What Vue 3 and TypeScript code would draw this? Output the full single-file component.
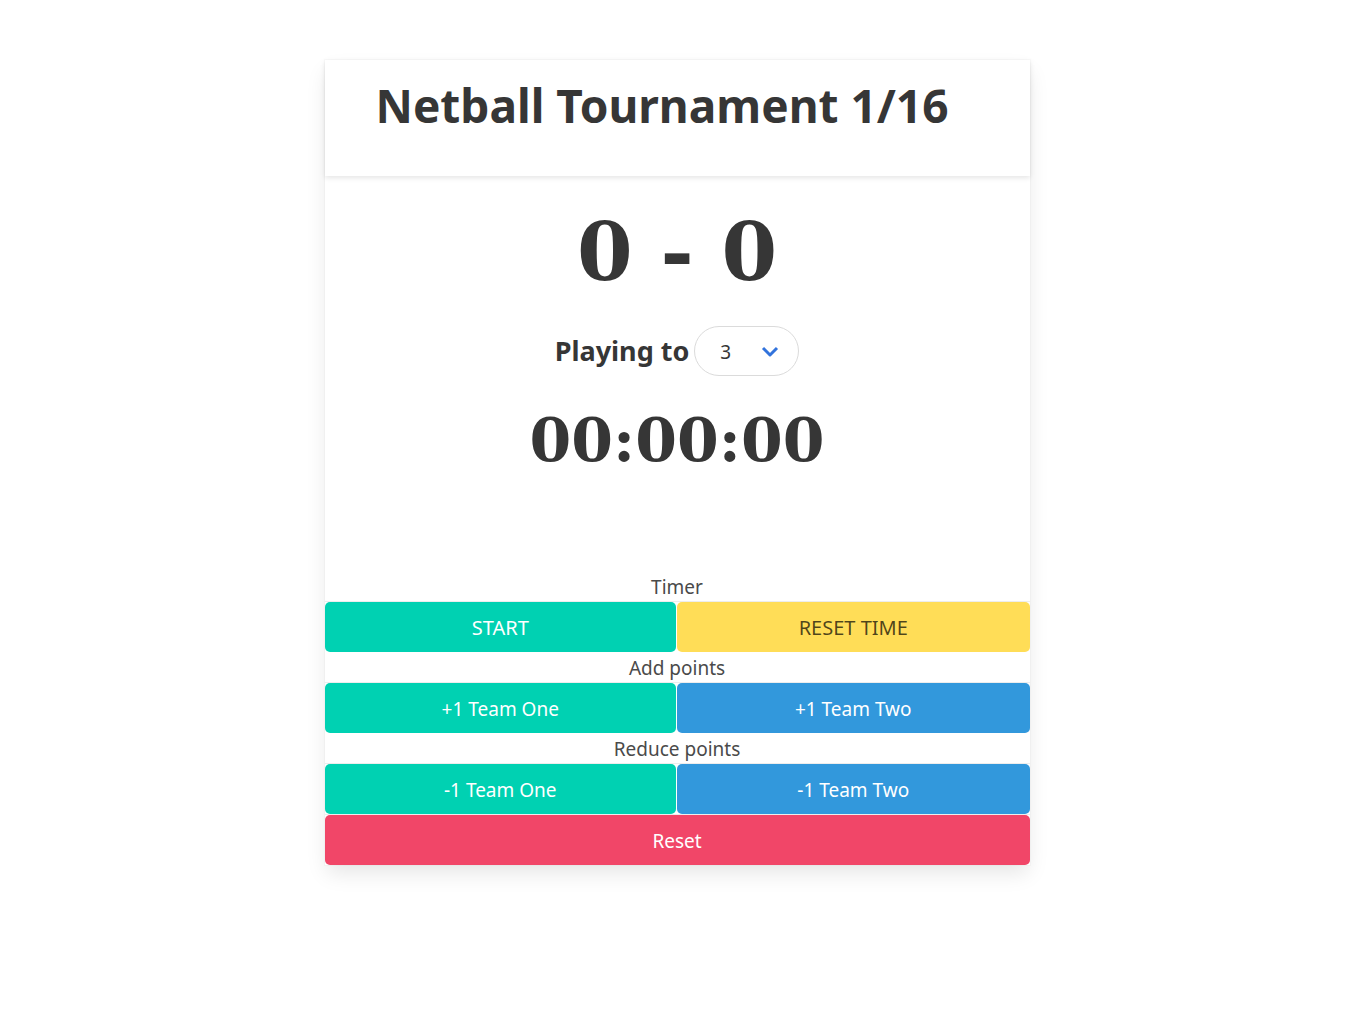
<script setup lang="ts">
import { computed, onBeforeUnmount, ref } from 'vue'

const title = 'Netball Tournament 1/16'
const teamOne = ref(0)
const teamTwo = ref(0)
const target = ref(3)
const targets = [3, 5, 7, 10]
const seconds = ref(0)
const running = ref(false)
let timer: number | undefined

const clock = computed(() =>
  [Math.floor(seconds.value / 3600), Math.floor(seconds.value / 60) % 60, seconds.value % 60]
    .map((n) => String(n).padStart(2, '0'))
    .join(':'),
)

function stop() {
  window.clearInterval(timer)
  running.value = false
}

function toggle() {
  if (running.value) {
    stop()
    return
  }
  running.value = true
  timer = window.setInterval(() => seconds.value++, 1000)
}

function resetTime() {
  stop()
  seconds.value = 0
}

function change(team: 1 | 2, amount: number) {
  const score = team === 1 ? teamOne : teamTwo
  score.value = Math.min(target.value, Math.max(0, score.value + amount))
}

function resetAll() {
  teamOne.value = 0
  teamTwo.value = 0
  resetTime()
}

onBeforeUnmount(stop)
</script>

<template>
  <main class="page">
    <article class="card">
      <header class="card-header">
        <h1 class="title">{{ title }}</h1>
      </header>

      <section class="card-content">
        <p class="score">{{ teamOne }} - {{ teamTwo }}</p>
        <div class="target">
          <label for="target">Playing to</label>
          <div class="select">
            <select id="target" v-model="target">
              <option v-for="n in targets" :key="n" :value="n">{{ n }}</option>
            </select>
            <svg class="arrow" viewBox="0 0 18 12" aria-hidden="true">
              <path d="M2 2 9 9l7-7" />
            </svg>
          </div>
        </div>
        <p class="clock">{{ clock }}</p>
      </section>

      <p class="caption">Timer</p>
      <footer class="actions timer-actions">
        <button class="primary" type="button" @click="toggle">{{ running ? 'STOP' : 'START' }}</button>
        <button class="warning" type="button" @click="resetTime">RESET TIME</button>
      </footer>
      <p class="caption">Add points</p>
      <footer class="actions">
        <button class="primary" type="button" @click="change(1, 1)">+1 Team One</button>
        <button class="info" type="button" @click="change(2, 1)">+1 Team Two</button>
      </footer>
      <p class="caption">Reduce points</p>
      <footer class="actions">
        <button class="primary" type="button" @click="change(1, -1)">-1 Team One</button>
        <button class="info" type="button" @click="change(2, -1)">-1 Team Two</button>
      </footer>
      <footer class="actions">
        <button class="danger" type="button" @click="resetAll">Reset</button>
      </footer>
    </article>
  </main>
</template>

<style>
body {
  margin: 0;
  background: #fff;
}
</style>

<style scoped>
* {
  box-sizing: border-box;
}
.page {
  padding: 60px 14px 60px 0;
  color: #4a4a4a;
  font: 19px/30px "Noto Sans", sans-serif;
}
h1,
p {
  margin: 0;
}
.card {
  max-width: 705px;
  margin: 0 auto;
  background: #fff;
  box-shadow: 0 10px 20px -2px rgba(10, 10, 10, 0.1), 0 0 0 1px rgba(10, 10, 10, 0.02);
  text-align: center;
}
.card-header {
  padding: 15px 80px 41px 50px;
  box-shadow: 0 2px 5px rgba(10, 10, 10, 0.1);
}
.title {
  color: #363636;
  font-size: 46px;
  font-weight: 700;
  line-height: 60px;
}
.card-content {
  padding: 30px 30px 95px;
  color: #363636;
}
.score,
.clock {
  font-family: "DejaVu Serif", serif;
  font-weight: 700;
}
.score {
  font-size: 80px;
  line-height: 92px;
}
.target {
  display: flex;
  justify-content: center;
  align-items: center;
  gap: 5px;
  margin: 28px 0;
}
.target label {
  font-size: 27px;
  font-weight: 700;
}
.select {
  position: relative;
}
.select select {
  display: block;
  width: 105px;
  height: 50px;
  padding: 2px 50px 0 25px;
  appearance: none;
  border: 1px solid #dbdbdb;
  border-radius: 25px;
  background: #fff;
  color: #363636;
  font: inherit;
}
.arrow {
  position: absolute;
  top: 20px;
  right: 20px;
  width: 18px;
  height: 12px;
  fill: none;
  stroke: #3273dc;
  stroke-width: 3;
  stroke-linejoin: round;
  pointer-events: none;
}
.clock {
  font-size: 60px;
  line-height: 72px;
}
.caption {
  padding-top: 3px;
  line-height: 27px;
}
.actions {
  display: grid;
  grid-auto-flow: column;
  grid-auto-columns: 1fr;
  border-top: 1px solid #ededed;
}
.actions button {
  height: 50px;
  padding: 2px 20px 0;
  border: 0;
  border-radius: 5px;
  color: #fff;
  font: inherit;
  cursor: pointer;
}
.actions button:not(:last-child) {
  margin-right: 1px;
}
.timer-actions button {
  font-size: 20px;
}
.actions .primary {
  background: #00d1b2;
}
.actions .warning {
  background: #ffdd57;
  color: rgba(0, 0, 0, 0.7);
}
.actions .info {
  background: #3298dc;
}
.actions .danger {
  background: #f14668;
}
</style>
